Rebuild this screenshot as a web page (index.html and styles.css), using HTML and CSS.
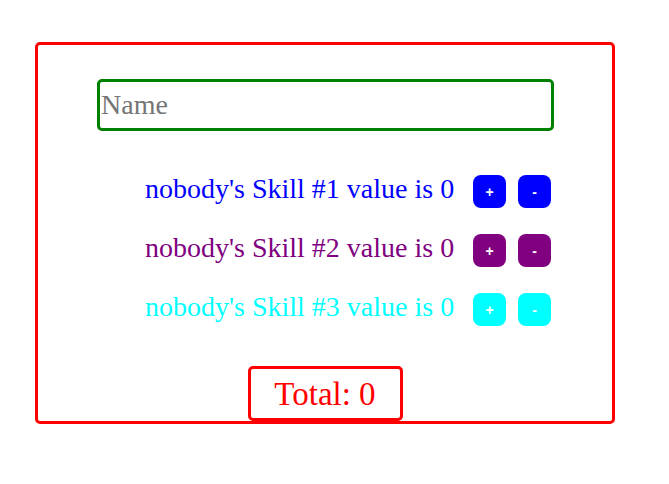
FILE: index.html
```html
<!DOCTYPE html>
<html>
<head>
<meta charset="utf-8">
<link rel="stylesheet" href="styles.css">
</head>
<body>
<div class="card">
  <input class="name" type="text" placeholder="Name">
  <div class="skills">
    <div class="row blue">
      <span class="label">nobody's Skill #1 value is 0</span>
      <button class="btn">+</button>
      <button class="btn">-</button>
    </div>
    <div class="row purple">
      <span class="label">nobody's Skill #2 value is 0</span>
      <button class="btn">+</button>
      <button class="btn">-</button>
    </div>
    <div class="row cyan">
      <span class="label">nobody's Skill #3 value is 0</span>
      <button class="btn">+</button>
      <button class="btn">-</button>
    </div>
  </div>
  <div class="total">Total: 0</div>
</div>
</body>
</html>
```
FILE: styles.css
```css
body {
  margin: 0;
  font-family: "Liberation Serif", "Times New Roman", serif;
}
.card {
  box-sizing: border-box;
  margin: 42px 0 0 35px;
  width: 580px;
  height: 382px;
  border: 3px solid #ff0000;
  border-radius: 5px;
  padding-top: 34px;
  display: flex;
  flex-direction: column;
  align-items: center;
}
.name {
  box-sizing: border-box;
  width: 457px;
  height: 52px;
  margin-left: 1px;
  border: 3px solid #008000;
  border-radius: 5px;
  padding: 0 0 0 1px;
  font-family: "Liberation Serif", serif;
  font-size: 28px;
  color: #000;
  outline: none;
}
.name::placeholder {
  color: #757575;
}
.skills {
  align-self: stretch;
  margin-top: 44px;
  display: flex;
  flex-direction: column;
  gap: 26px;
}
.row {
  display: flex;
  align-items: center;
  padding-left: 107px;
  height: 33px;
}
.label {
  font-size: 28px;
  margin-right: 19px;
  margin-top: -5px;
}
.btn {
  box-sizing: border-box;
  width: 33px;
  height: 33px;
  border: none;
  border-radius: 8px;
  color: #fff;
  font-family: "Liberation Sans", Arial, sans-serif;
  font-weight: bold;
  font-size: 14px;
  padding: 0;
  margin-right: 12px;
}
.blue .label { color: #0000ff; }
.blue .btn { background: #0000ff; }
.purple .label { color: #800080; }
.purple .btn { background: #800080; }
.cyan .label { color: #00ffff; }
.cyan .btn { background: #00ffff; }
.total {
  box-sizing: border-box;
  margin-top: 40px;
  width: 155px;
  height: 55px;
  border: 3px solid #ff0000;
  border-radius: 5px;
  color: #ff0000;
  font-size: 33px;
  padding-top: 2px;
  display: flex;
  align-items: center;
  justify-content: center;
}
```
